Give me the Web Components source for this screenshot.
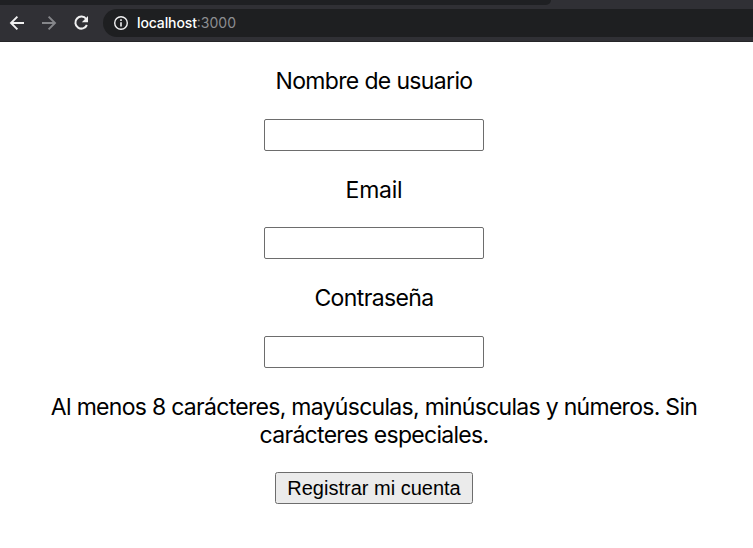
<!DOCTYPE html>
<html lang="es"><head><meta charset="utf-8"><title>Registro</title>
<style>
html,body{margin:0;height:100%;background:#fff}
body{font-family:Inter,"Liberation Sans",sans-serif;color:#000;overflow:hidden}
</style></head><body>
<browser-bar></browser-bar>
<signup-form>
<form-field label="Nombre de usuario" style="--track:-.66px"></form-field>
<form-field label="Email" style="--track:-.25px;--drop:.6px"></form-field>
<form-field label="Contraseña" type="password"></form-field>
<form-note>Al menos 8 carácteres, mayúsculas, minúsculas y números. Sin carácteres especiales.</form-note>
<action-button>Registrar mi cuenta</action-button>
</signup-form>
<script>
const define=(name,html,init)=>customElements.define(name,class extends HTMLElement{
  constructor(){super();this.attachShadow({mode:'open'}).innerHTML=html;}
  connectedCallback(){if(init)init(this,this.shadowRoot);}
});
define('browser-bar',`<style>
:host{display:block;height:42px;background:#303035;box-sizing:border-box;border-bottom:1px solid #252528;overflow:hidden}
.tab{height:5px;width:551px;background:#1f2023;border-bottom-right-radius:6px}
.row{display:flex;align-items:center;margin-top:4px;height:28px}
.nav{display:flex;width:103px;flex:none}
.address{flex:1;height:28px;box-sizing:border-box;padding-left:10px;background:#1e1f21;border-radius:14px 0 0 14px;display:flex;align-items:center;gap:8px;font-size:14px;color:#fff}
.url{font-weight:500;letter-spacing:-.12px;padding-bottom:1px}
.port{color:#8d8e91;font-weight:400;letter-spacing:0}
svg{display:block;fill:none}
</style><div class="tab"></div><div class="row"><div class="nav">
<svg width="103" height="28" viewBox="0 9 103 28"><g stroke-width="1.9"><path stroke="#f1f1f2" d="M24 23H11.5M17.4 16.6L11 23l6.4 6.4"/><path stroke="#85868a" d="M42 23h12.500M48.600 16.600L55 23l-6.400 6.400"/><path stroke="#f1f1f2" stroke-width="2" d="M86.200 19A6 6 0 1 0 86.900 25"/></g><path fill="#f1f1f2" d="M88 16v6.200h-6.200z"/></svg></div>
<div class="address"><svg width="16" height="16" viewBox="0 0 16 16"><circle cx="8" cy="8" r="6.300" stroke="#f1f1f2" stroke-width="1.400"/><path stroke="#f1f1f2" stroke-width="1.600" d="M8 7.200v4.200M8 4.300v1.600"/></svg><span class="url">localhost<span class="port">:3000</span></span></div></div>`);
define('signup-form',`<style>:host{display:flex;flex-direction:column;align-items:center;gap:24.4px;width:748px;padding-top:25px;box-sizing:border-box;font-size:23px;line-height:28px;text-align:center}</style><slot></slot>`);
define('form-field',`<style>:host{display:block;letter-spacing:var(--track,-.62px)}label{display:flex;flex-direction:column;align-items:center;gap:24px}
span{padding-top:var(--drop,0px);margin-bottom:calc(0px - var(--drop,0px))}
input{box-sizing:border-box;width:220px;height:32px;margin:0;padding:2px 4px;border:1px solid #6d6d6d;border-radius:2px;background:#fff;font:20px "Liberation Sans",sans-serif;outline:0}</style><label><span></span><input></label>`,
(h,r)=>{r.querySelector('span').textContent=h.getAttribute('label');r.querySelector('input').type=h.getAttribute('type')||'text'});
define('form-note',`<style>:host{display:block;width:668px;letter-spacing:-.71px;padding-top:.8px;margin-bottom:-1.3px}</style><slot></slot>`);
define('action-button',`<style>:host{display:block}button{display:block;box-sizing:border-box;width:198px;height:32px;padding:0;border:1px solid #6d6d6d;border-radius:2.500px;background:#ebebeb;color:#000;font:20px "Liberation Sans",sans-serif}</style><button><slot></slot></button>`);
</script></body></html>
